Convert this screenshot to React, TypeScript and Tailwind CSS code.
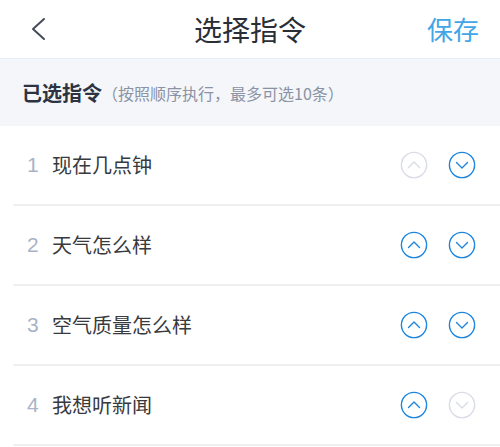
import React from "react";

const BLUE = "#1d86dc";
const GREY = "#d9dce5";

function CircleIcon({ dir, active }: { dir: "up" | "down"; active: boolean }) {
  const c = active ? BLUE : GREY;
  return (
    <svg width="28" height="28" viewBox="0 0 28 28" fill="none">
      <circle cx="14" cy="14" r="12.6" stroke={c} strokeWidth="1.4" />
      {dir === "up" ? (
        <path d="M8.5 16.5 L14 11 L19.5 16.5" stroke={c} strokeWidth="1.4" strokeLinecap="round" strokeLinejoin="round" />
      ) : (
        <path d="M8.5 11.5 L14 17 L19.5 11.5" stroke={c} strokeWidth="1.4" strokeLinecap="round" strokeLinejoin="round" />
      )}
    </svg>
  );
}

const items = [
  { n: 1, t: "现在几点钟", up: false, down: true },
  { n: 2, t: "天气怎么样", up: true, down: true },
  { n: 3, t: "空气质量怎么样", up: true, down: true },
  { n: 4, t: "我想听新闻", up: true, down: false },
];

export default function App() {
  return (
    <div
      className="w-[500px] h-[447px] bg-white overflow-hidden"
      style={{ fontFamily: '"Noto Sans CJK SC", "Noto Sans", sans-serif' }}
    >
      <div className="h-[59px] flex items-center justify-between px-[30px] border-b border-[#e5edf7] relative">
        <svg width="16" height="24" viewBox="0 0 16 24" fill="none">
          <path d="M14 2 L3 12 L14 22" stroke="#454c58" strokeWidth="2" strokeLinecap="round" strokeLinejoin="round" />
        </svg>
        <div className="absolute left-0 right-0 text-center text-[28px] text-[#2a2e36] pointer-events-none leading-none">
          选择指令
        </div>
        <div className="text-[26px] text-[#42a5e7] leading-none mr-[-9px]">保存</div>
      </div>
      <div className="h-[67px] bg-[#f4f6f9] flex items-center pl-[22px]">
        <span className="text-[20px] font-bold text-[#2d3340]">已选指令</span>
        <span className="text-[16px] text-[#8a93a5]">（按照顺序执行，最多可选10条）</span>
      </div>
      <div className="pl-[13px]">
        {items.map((it) => (
          <div key={it.n} className="h-[80px] flex items-center border-b-2 border-[#f0f0f2]">
            <span
              className="w-[39px] pl-[14px] text-[21px] text-[#a8b3c7]"
              style={{ fontFamily: '"Liberation Sans", Arial, sans-serif' }}
            >
              {it.n}
            </span>
            <span className="flex-1 text-[20px] text-[#383a3e]">{it.t}</span>
            <div className="flex items-center gap-[20px] pr-[24px]">
              <CircleIcon dir="up" active={it.up} />
              <CircleIcon dir="down" active={it.down} />
            </div>
          </div>
        ))}
      </div>
    </div>
  );
}
